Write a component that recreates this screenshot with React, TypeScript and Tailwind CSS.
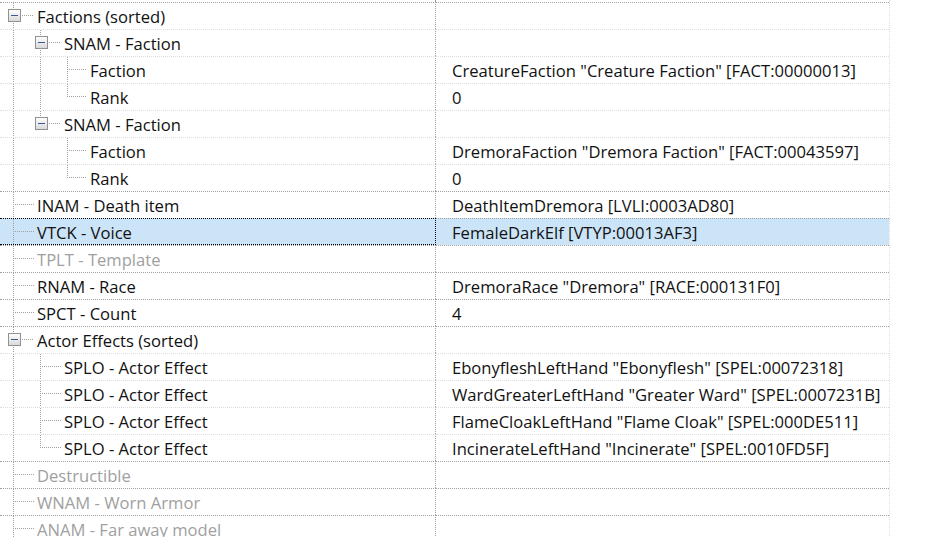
import React from "react";

type Row = {
  label: string;
  value?: string;
  level: number;
  expander?: boolean;
  disabled?: boolean;
  selected?: boolean;
  anc: number[];
  more: boolean;
};

const rows: Row[] = [
  { label: "Factions (sorted)", level: 0, expander: true, anc: [], more: true },
  { label: "SNAM - Faction", level: 1, expander: true, anc: [0], more: true },
  { label: "Faction", value: 'CreatureFaction "Creature Faction" [FACT:00000013]', level: 2, anc: [0, 1], more: true },
  { label: "Rank", value: "0", level: 2, anc: [0, 1], more: false },
  { label: "SNAM - Faction", level: 1, expander: true, anc: [0], more: false },
  { label: "Faction", value: 'DremoraFaction "Dremora Faction" [FACT:00043597]', level: 2, anc: [0], more: true },
  { label: "Rank", value: "0", level: 2, anc: [0], more: false },
  { label: "INAM - Death item", value: "DeathItemDremora [LVLI:0003AD80]", level: 0, anc: [], more: true },
  { label: "VTCK - Voice", value: "FemaleDarkElf [VTYP:00013AF3]", level: 0, selected: true, anc: [], more: true },
  { label: "TPLT - Template", level: 0, disabled: true, anc: [], more: true },
  { label: "RNAM - Race", value: 'DremoraRace "Dremora" [RACE:000131F0]', level: 0, anc: [], more: true },
  { label: "SPCT - Count", value: "4", level: 0, anc: [], more: true },
  { label: "Actor Effects (sorted)", level: 0, expander: true, anc: [], more: true },
  { label: "SPLO - Actor Effect", value: 'EbonyfleshLeftHand "Ebonyflesh" [SPEL:00072318]', level: 1, anc: [0], more: true },
  { label: "SPLO - Actor Effect", value: 'WardGreaterLeftHand "Greater Ward" [SPEL:0007231B]', level: 1, anc: [0], more: true },
  { label: "SPLO - Actor Effect", value: 'FlameCloakLeftHand "Flame Cloak" [SPEL:000DE511]', level: 1, anc: [0], more: true },
  { label: "SPLO - Actor Effect", value: 'IncinerateLeftHand "Incinerate" [SPEL:0010FD5F]', level: 1, anc: [0], more: false },
  { label: "Destructible", level: 0, disabled: true, anc: [], more: true },
  { label: "WNAM - Worn Armor", level: 0, disabled: true, anc: [], more: true },
  { label: "ANAM - Far away model", level: 0, disabled: true, anc: [], more: true },
];

const LINE = "#a0a0a0";
const levelX = (l: number) => 13 + 27 * l;
const textX = (l: number) => 37 + 26.5 * l;

function VDots({ x, y1, y2 }: { x: number; y1: number; y2: number }) {
  const out: React.ReactNode[] = [];
  for (let y = y1; y < y2; y += 2) out.push(<rect key={y} x={x} y={y} width={1} height={1} fill={LINE} />);
  return <>{out}</>;
}
function HDots({ y, x1, x2 }: { y: number; x1: number; x2: number }) {
  const out: React.ReactNode[] = [];
  for (let x = x1; x < x2; x += 2) out.push(<rect key={x} x={x} y={y} width={1} height={1} fill={LINE} />);
  return <>{out}</>;
}

function TreeLines({ row, width, h }: { row: Row; width: number; h: number }) {
  const mid = 12;
  const lx = levelX(row.level);
  const tx = Math.round(textX(row.level));
  return (
    <svg width={width} height={h} className="shrink-0 block self-start">
      {row.anc.map((l) => (
        <VDots key={l} x={levelX(l)} y1={0} y2={h} />
      ))}
      <VDots x={lx} y1={0} y2={row.more ? h : mid + 1} />
      {row.expander ? (
        <>
          <HDots y={mid} x1={lx + 9} x2={tx - 3} />
          <defs>
            <linearGradient id="bx" x1="0" y1="0" x2="0" y2="1">
              <stop offset="0" stopColor="#ffffff" />
              <stop offset="1" stopColor="#d8d8d8" />
            </linearGradient>
          </defs>
          <rect x={lx - 4.5} y={mid - 5.5} width={12} height={12} fill="url(#bx)" stroke="#919191" strokeWidth={1} />
          <rect x={lx - 2} y={mid} width={7} height={1} fill="#3c5a96" />
        </>
      ) : (
        <HDots y={mid} x1={lx + 2} x2={tx - 3} />
      )}
    </svg>
  );
}

export default function App() {
  return (
    <div
      className="w-[925px] h-[537px] overflow-hidden bg-white text-black"
      style={{ fontFamily: '"Open Sans", "Noto Sans", sans-serif' }}
    >
      <div className="w-[890px] border-r border-dotted border-r-[#dcdcdc]">
        <div className="flex h-[2px]">
          <div className="w-[436px] shrink-0 border-r border-dotted border-r-[#a0a0a0]" />
        </div>
        {rows.map((row, i) => {
          const dark = row.level === 0;
          const topColor = dark ? "border-t-[#a0a0a0]" : "border-t-[#dcdcdc]";
          const w = Math.round(textX(row.level));
          return (
            <div key={i} className={`flex h-[27px] text-[16.6px] ${row.selected ? "bg-[#cce4f7]" : ""}`}>
              {row.selected ? (
                <div className="w-[436px] shrink-0 flex items-center border-t border-b border-r border-dotted border-black">
                  <TreeLines row={row} width={w} h={25} />
                  <span className={`whitespace-nowrap leading-none pt-[3px] ${row.disabled ? "text-[#a0a0a0]" : "text-[#111]"}`}>{row.label}</span>
                </div>
              ) : (
                <div className={`w-[436px] shrink-0 flex items-center border-t border-r border-dotted ${topColor} border-r-[#a0a0a0]`}>
                  <TreeLines row={row} width={w} h={26} />
                  <span className={`whitespace-nowrap leading-none pt-[3px] ${row.disabled ? "text-[#a0a0a0]" : "text-[#111]"}`}>{row.label}</span>
                </div>
              )}
              <div className={`flex-1 flex items-center pl-[16px] border-t border-dotted ${topColor}`}>
                <span className="whitespace-nowrap leading-none pt-[3px] text-[#111]">{row.value ?? ""}</span>
              </div>
            </div>
          );
        })}
      </div>
    </div>
  );
}
